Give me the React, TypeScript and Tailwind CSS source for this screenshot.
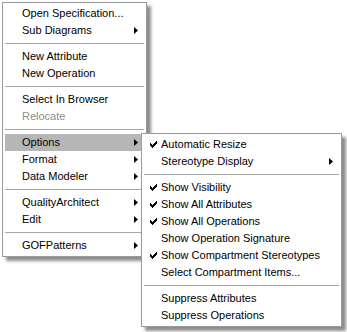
import React from "react";

type Item =
  | { sep: true }
  | { label: string; sub?: boolean; disabled?: boolean; checked?: boolean; active?: boolean };

const mainItems: Item[] = [
  { label: "Open Specification..." },
  { label: "Sub Diagrams", sub: true },
  { sep: true },
  { label: "New Attribute" },
  { label: "New Operation" },
  { sep: true },
  { label: "Select In Browser" },
  { label: "Relocate", disabled: true },
  { sep: true },
  { label: "Options", sub: true, active: true },
  { label: "Format", sub: true },
  { label: "Data Modeler", sub: true },
  { sep: true },
  { label: "QualityArchitect", sub: true },
  { label: "Edit", sub: true },
  { sep: true },
  { label: "GOFPatterns", sub: true },
];

const optionItems: Item[] = [
  { label: "Automatic Resize", checked: true },
  { label: "Stereotype Display", sub: true },
  { sep: true },
  { label: "Show Visibility", checked: true },
  { label: "Show All Attributes", checked: true },
  { label: "Show All Operations", checked: true },
  { label: "Show Operation Signature" },
  { label: "Show Compartment Stereotypes", checked: true },
  { label: "Select Compartment Items..." },
  { sep: true },
  { label: "Suppress Attributes" },
  { label: "Suppress Operations" },
];

function Check() {
  return (
    <svg width="7" height="7" viewBox="0 0 7 7" shapeRendering="crispEdges" className="absolute left-[6px] top-[5px]">
      <path d="M6 0h1v1h-1zM5 1h2v1h-2zM0 2h1v1h-1zM4 2h3v1h-3zM0 3h2v1h-2zM3 3h3v1h-3zM0 4h5v1h-5zM1 5h3v1h-3zM2 6h1v1h-1z" fill="#000" />
    </svg>
  );
}

function Arrow() {
  return (
    <svg width="4" height="7" viewBox="0 0 4 7" className="absolute right-[6px] top-[5px]">
      <polygon points="0,0 4,3.5 0,7" fill="#000" />
    </svg>
  );
}

function Menu({ items, className }: { items: Item[]; className: string }) {
  return (
    <div
      className={`absolute bg-white border border-[#9a9a9a] p-[2px] shadow-[4px_4px_3px_rgba(0,0,0,0.45)] ${className}`}
    >
      {items.map((it, i) =>
        "sep" in it ? (
          <div key={i} className="h-[9px] flex items-center">
            <div className="h-px w-full bg-[#a6a6a6]" />
          </div>
        ) : (
          <div
            key={i}
            className={`relative h-[17px] pl-[17px] leading-[17px] whitespace-nowrap ${
              it.active ? "bg-[#b6b6b6]" : ""
            } ${it.disabled ? "text-[#8c8c8c]" : "text-black"}`}
          >
            {it.checked && <Check />}
            {it.label}
            {it.sub && <Arrow />}
          </div>
        )
      )}
    </div>
  );
}

export default function App() {
  return (
    <div
      className="relative w-[347px] h-[332px] bg-white text-[11px] overflow-hidden"
      style={{ fontFamily: '"Liberation Sans", Arial, sans-serif' }}
    >
      <Menu items={mainItems} className="left-[2px] top-[2px] w-[145px]" />
      <Menu items={optionItems} className="left-[141px] top-[133px] w-[201px]" />
    </div>
  );
}
